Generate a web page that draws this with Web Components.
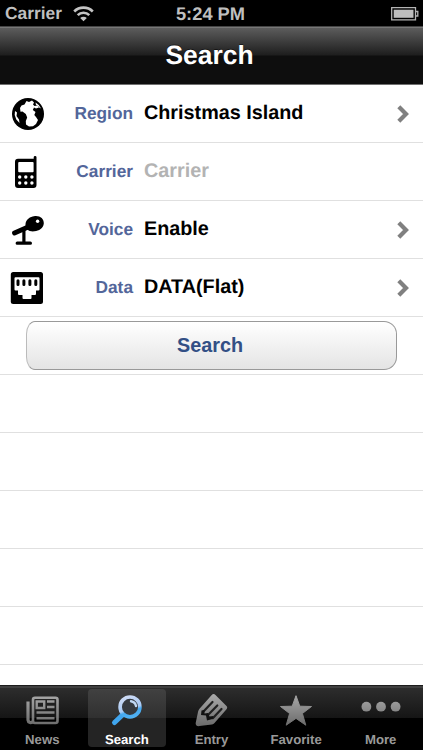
<!DOCTYPE html>
<html lang="en">
<head>
<meta charset="utf-8">
<title>Search</title>
<style>
html,body{
    margin:0;
    height:100%;
    background:#fff;
    overflow:hidden;
}
body{
    font-family:"Liberation Sans",Arial,sans-serif;
    font-weight:bold;
    text-rendering:geometricPrecision;
}
</style>
</head>
<body>
<app-screen>
    <status-bar slot="top" carrier="Carrier">5:24 PM</status-bar>
    <nav-bar slot="top">Search</nav-bar>
    <form-row label="Region" arrow>
        <svg slot="icon" viewBox="0 0 32 32" width="32" height="32">
            <circle cx="16" cy="16" r="16"/>
            <path fill="#fff" d="M14.500 3 17 4 20 2.500 22 4.500 21 6.500 22.500 8 25.500 7.500 27 9.500 24 10.500 22 9.500 20.800 12 23.500 14 22.300 17 24 19 26 22 24 26 21 28.300 17 28.500 14 26.500 13.800 23 15.200 19.500 13.800 16 10.500 13.500 8.500 13.800 8 10 9.500 7.500 12.500 6.500ZM3 13 5 14.500 4.500 18 7 21.500 7.500 25 4.300 21.500 2.700 17Z"/>
            <path fill="#fff" d="M23.500 4.500 26.800 7 29 10.500 27.200 9.500 26 8 24 7Z"/>
        </svg>
        Christmas Island
    </form-row>
    <form-row label="Carrier" empty>
        <svg slot="icon" viewBox="0 0 32 32" width="32" height="32">
            <path d="M6 2.800h15.700V1.300a1.400 1.400 0 0 1 2.800 0V29a3 3 0 0 1-3 3H6a3 3 0 0 1-3-3V5.800a3 3 0 0 1 3-3z"/>
            <rect x="6.200" y="6" width="15.400" height="10.300" rx="1" fill="#fff"/>
            <g fill="#fff">
                <circle cx="7.700" cy="21" r="1.700"/><circle cx="13.800" cy="21" r="1.700"/><circle cx="19.900" cy="21" r="1.700"/>
                <circle cx="7.700" cy="27" r="1.700"/><circle cx="13.800" cy="27" r="1.700"/><circle cx="19.900" cy="27" r="1.700"/>
            </g>
        </svg>
        Carrier
    </form-row>
    <form-row label="Voice" arrow>
        <svg slot="icon" viewBox="0 0 32 32" width="32" height="32">
            <path d="M13.500 10C14 5 18.500 2.600 22 2.200 27.500 1.200 32.200 4.500 31.800 9.500 31.300 14.500 27 16.800 22.500 17.300 19.500 17.600 17 17 15 15.500 13.900 14.400 13.300 12.500 13.500 10Z"/>
            <path d="M2.500 19 15 13.500" fill="none" stroke="#000" stroke-width="4.800" stroke-linecap="round"/>
            <path d="M11.900 16v13M5.200 29.200h13.200" fill="none" stroke="#000" stroke-width="3.200" stroke-linecap="round"/>
            <circle cx="25.600" cy="7.200" r="1.700" fill="#fff"/>
        </svg>
        Enable
    </form-row>
    <form-row label="Data" arrow>
        <svg slot="icon" viewBox="0 0 32 32" width="32" height="32">
            <rect x="-1.200" y="0" width="32.200" height="32" rx="2.500"/>
            <path fill="#fff" d="M3.500 5.300H26.500a1 1 0 0 1 1 1V17.500a1 1 0 0 1-1 1H24v3.500a1 1 0 0 1-1 1h-3.500v3a1 1 0 0 1-1 1h-7a1 1 0 0 1-1-1V23H7a1 1 0 0 1-1-1v-3.500H3.500a1 1 0 0 1-1-1V6.300a1 1 0 0 1 1-1z"/>
            <path d="M6 8.700v3.800M11.900 8.700v3.800M17.900 8.700v3.800M23.800 8.700v3.800" stroke="#000" stroke-width="3" stroke-linecap="round"/>
        </svg>
        DATA(Flat)
    </form-row>
    <push-button>Search</push-button>
    <tab-bar slot="bottom">
        <tab-item label="News">
            <svg viewBox="0 0 36 36" width="36" height="36">
                <g fill="none" stroke="url(#metal)">
                    <path stroke-width="2.600" d="M11 3.800h20.500a2 2 0 0 1 2 2V27a2 2 0 0 1-2 2H11a2 2 0 0 1-2-2V5.800a2 2 0 0 1 2-2z"/>
                    <path stroke-width="3.200" d="M4 7.500v18.500a2.800 2.800 0 0 0 5 1.500"/>
                    <path stroke-width="2.400" d="M12.700 7.500h7.500v6.500h-7.500zM23 7.500h7.500M23 13h7.500M12.500 18.500h18M12.500 24.200h18"/>
                </g>
            </svg>
        </tab-item>
        <tab-item label="Search" active>
            <svg viewBox="0 0 36 36" width="36" height="36">
                <path d="M15 19.500 5.500 28.500" stroke="#40a5ee" stroke-width="5" stroke-linecap="round"/>
                <circle cx="21" cy="12.900" r="9.900" fill="#353a40" stroke="url(#lens)" stroke-width="3.700"/>
                <path d="M22 7.300a6 6 0 0 1 5 4.800" fill="none" stroke="#c0d8f4" stroke-width="2.400" stroke-linecap="round"/>
            </svg>
        </tab-item>
        <tab-item label="Entry">
            <svg viewBox="0 0 36 36" width="36" height="36">
                <path fill="url(#metal)" d="M18.500 1.300Q20.500-.9 22.500 1L33.500 12Q35 13.500 33.300 15.500L21.500 29Q20.500 30.100 19 30.500L6.500 32.100Q2.300 32.500 2.700 29L5 18Q5.300 16.300 6.300 15Z"/>
                <path fill="none" stroke="#202020" stroke-width="2.200" stroke-linecap="round" d="M19.500 8 10.500 17.500M24.300 11.500 15.500 20.500M28.500 15 19.800 24.200"/>
                <path fill="#111" d="M8.500 16.500 8 21 13 21.500 14 26.500 19.500 25 20.500 22 16.500 22.500 15 19 11.500 19.500 11.500 16Z"/>
            </svg>
        </tab-item>
        <tab-item label="Favorite">
            <svg viewBox="0 0 36 36" width="36" height="36">
                <path fill="url(#metal)" stroke="url(#metal)" stroke-linejoin="round" d="M18 1.700 21.800 12.200 33.500 12.500 24.400 19.500 27.800 31.200 18 24.400 8.200 31.200 11.600 19.500 2.500 12.500 14.200 12.200Z"/>
            </svg>
        </tab-item>
        <tab-item label="More">
            <svg viewBox="0 0 40 36" width="40" height="36">
                <g fill="url(#metal)"><circle cx="5.400" cy="12.700" r="4.900"/><circle cx="20" cy="12.700" r="4.900"/><circle cx="34.600" cy="12.700" r="4.900"/></g>
            </svg>
        </tab-item>
    </tab-bar>
</app-screen>

<svg width="0" height="0" style="position:absolute">
    <defs>
        <linearGradient id="metal" gradientUnits="userSpaceOnUse" x1="0" y1="0" x2="0" y2="34">
            <stop offset="0" stop-color="#aaa"/><stop offset="1" stop-color="#666"/>
        </linearGradient>
        <linearGradient id="lens" gradientUnits="userSpaceOnUse" x1="16" y1="2" x2="24" y2="26">
            <stop offset="0" stop-color="#d0dcf5"/><stop offset=".55" stop-color="#a6c9f5"/><stop offset=".65" stop-color="#45a9f0"/><stop offset="1" stop-color="#55b5f5"/>
        </linearGradient>
    </defs>
</svg>

<script>
class AppScreen extends HTMLElement {

    constructor() {
        super();
        const shadowRoot = this.attachShadow({ mode: 'open' });
        shadowRoot.innerHTML = `
        <style>
        :host{
            display:flex;
            flex-direction:column;
            height:100vh;
        }
        main{
            flex:1;
            min-height:0;
            overflow:hidden;
            background:repeating-linear-gradient(#fff 0 57px,#e0e0e0 57px 58px);
        }
        </style>
        <slot name="top"></slot>
        <main><slot></slot></main>
        <slot name="bottom"></slot>
        `
    }
}

class StatusBar extends HTMLElement {

    constructor() {
        super();
        const shadowRoot = this.attachShadow({ mode: 'open' });
        shadowRoot.innerHTML = `
        <style>
        :host{
            box-sizing:border-box;
            display:grid;
            grid-template-columns:1fr auto 1fr;
            align-items:center;
            height:26px;
            padding:1px 4px 0 5px;
            background:#000;
            color:#bfbfbf;
            font-size:18.3px;
        }
        .left{
            display:flex;
            align-items:center;
            gap:11px;
            font-size:17.4px;
        }
        .time{
            margin-left:-3px;
        }
        svg{
            display:block;
        }
        .battery{
            justify-self:end;
        }
        </style>
        <div class="left">
            <span>${this.getAttribute('carrier')}</span>
            <svg width="21" height="16" viewBox="0 0 21 16">
                <g fill="none" stroke="#c4c4c4" stroke-width="2.600">
                    <path d="M1.200 5.500a13.200 13.200 0 0 1 18.600 0"/>
                    <path d="M4.700 9.200a8.200 8.200 0 0 1 11.600 0"/>
                </g>
                <path fill="#c4c4c4" d="M7.200 12a4.700 4.700 0 0 1 6.600 0L10.500 15.300Z"/>
            </svg>
        </div>
        <span class="time"><slot></slot></span>
        <svg class="battery" width="28" height="14" viewBox="0 0 28 14">
            <path d="M.7.700h23.800v12.100H.7zM24.500 4.500h2.300v4.500h-2.300" fill="none" stroke="#b4b4b4" stroke-width="1.300"/>
            <path d="M2.700 2.700h19.800v8.100H2.700z" fill="#bdbdbd"/>
        </svg>
        `
    }
}

class NavBar extends HTMLElement {

    constructor() {
        super();
        const shadowRoot = this.attachShadow({ mode: 'open' });
        shadowRoot.innerHTML = `
        <style>
        :host{
            box-sizing:border-box;
            display:flex;
            align-items:center;
            justify-content:center;
            height:59px;
            padding:0 4px 1px 0;
            border-top:1px solid #444;
            border-bottom:1px solid #707070;
            background:linear-gradient(#777 0 1px,#5c5c5c 1px,#1e1e1e 28px,#0e0e0e 29px);
            color:#fff;
            font-size:26.4px;
            text-shadow:0 -1px 0 rgba(0,0,0,.5);
        }
        </style>
        <slot></slot>
        `
    }
}

class FormRow extends HTMLElement {

    constructor() {
        super();
        const shadowRoot = this.attachShadow({ mode: 'open' });
        shadowRoot.innerHTML = `
        <style>
        :host{
            box-sizing:border-box;
            display:grid;
            grid-template-columns:32px 77px 1fr 13px;
            column-gap:12px;
            align-items:center;
            height:58px;
            padding:0 13px 1px 12px;
            font-size:19.8px;
            color:#000;
        }
        label{
            color:#53669a;
            font-size:17.3px;
            text-align:right;
        }
        .value{
            margin-left:-1px;
        }
        :host([empty]) .value{
            color:#b3b3b3;
        }
        .arrow{
            display:none;
        }
        :host([arrow]) .arrow{
            display:block;
        }
        ::slotted(svg){
            display:block;
            overflow:visible;
        }
        </style>
        <slot name="icon"></slot>
        <label>${this.getAttribute('label')}</label>
        <span class="value"><slot></slot></span>
        <svg class="arrow" width="13" height="18" viewBox="0 0 13 18">
            <path d="M1.800 1.800 9 9 1.800 16.200" fill="none" stroke="#808080" stroke-width="4.200"/>
        </svg>
        `
    }
}

class PushButton extends HTMLElement {

    constructor() {
        super();
        const shadowRoot = this.attachShadow({ mode: 'open' });
        shadowRoot.innerHTML = `
        <style>
        :host{
            display:flex;
            height:58px;
            padding:4px 26px 5px;
            box-sizing:border-box;
        }
        button{
            flex:1;
            padding:0 3px 0 0;
            border:1px solid #999;
            border-left-color:#bbb;
            border-right-color:#999;
            border-radius:9px 13px 13px 9px / 13px;
            background:linear-gradient(#fff,#e4e4e4);
            color:#324f85;
            font:inherit;
            font-size:19.8px;
        }
        </style>
        <button><slot></slot></button>
        `
    }
}

class TabBar extends HTMLElement {

    constructor() {
        super();
        const shadowRoot = this.attachShadow({ mode: 'open' });
        shadowRoot.innerHTML = `
        <style>
        :host{
            box-sizing:border-box;
            display:grid;
            grid-template-columns:repeat(5,1fr);
            height:65px;
            padding:4px 0 3px;
            background:linear-gradient(#1c1c1c 0 1px,#404040 1px 3px,#2d2d2d 3px,#151515 33px,#000 33px);
        }
        </style>
        <slot></slot>
        `
    }
}

class TabItem extends HTMLElement {

    constructor() {
        super();
        const shadowRoot = this.attachShadow({ mode: 'open' });
        shadowRoot.innerHTML = `
        <style>
        :host{
            box-sizing:border-box;
            display:flex;
            flex-direction:column;
            align-items:center;
            margin:0 3px;
            padding-top:5px;
            border-radius:4px;
            color:#999;
            font-size:13.2px;
        }
        :host([active]){
            background:linear-gradient(#414141,#303030 29px,#242424 29px);
            color:#fff;
        }
        span{
            margin-top:2px;
            line-height:15px;
        }
        ::slotted(svg){
            display:block;
        }
        </style>
        <slot></slot>
        <span>${this.getAttribute('label')}</span>
        `
    }
}

customElements.define('app-screen', AppScreen);
customElements.define('status-bar', StatusBar);
customElements.define('nav-bar', NavBar);
customElements.define('form-row', FormRow);
customElements.define('push-button', PushButton);
customElements.define('tab-bar', TabBar);
customElements.define('tab-item', TabItem);
</script>
</body>
</html>
